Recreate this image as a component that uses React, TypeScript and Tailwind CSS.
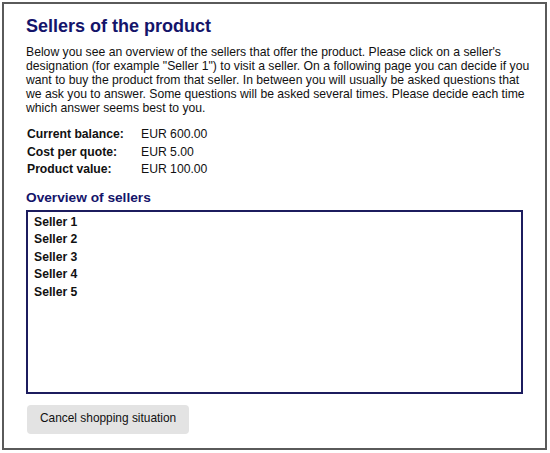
export default function App() {
  const rows = [
    ["Current balance:", "EUR 600.00"],
    ["Cost per quote:", "EUR 5.00"],
    ["Product value:", "EUR 100.00"],
  ];
  const sellers = ["Seller 1", "Seller 2", "Seller 3", "Seller 4", "Seller 5"];
  return (
    <div className="w-[550px] h-[453px] bg-white pt-[2px] pl-[2px]" style={{ fontFamily: '"Liberation Sans", Arial, sans-serif' }}>
      <div className="w-[545px] h-[448px] border-2 border-[#5a5a5a] pl-[22px] pr-[14px] pt-[12px] text-black">
        <h1 className="text-[18px] leading-[21px] font-bold text-[#14146a]">Sellers of the product</h1>
        <p className="mt-[8px] text-[12.2px] leading-[14px] text-[#111]">
          Below you see an overview of the sellers that offer the product. Please click on a seller's designation (for example "Seller 1") to visit a seller. On a following page you can decide if you want to buy the product from that seller. In between you will usually be asked questions that we ask you to answer. Some questions will be asked several times. Please decide each time which answer seems best to you.
        </p>
        <div className="mt-[11px] text-[12.2px] leading-[17.5px] text-[#111]">
          {rows.map(([k, v]) => (
            <div key={k} className="flex">
              <div className="w-[115px] pl-[1px] font-bold">{k}</div>
              <div>{v}</div>
            </div>
          ))}
        </div>
        <h2 className="mt-[11px] text-[13.7px] leading-[16px] font-bold text-[#14146a]">Overview of sellers</h2>
        <div className="mt-[4px] w-[497px] h-[184px] border-2 border-[#1c1c5e] pl-[6px] pt-[2px] text-[12.2px] leading-[17.5px] font-bold text-[#111]">
          {sellers.map((s) => (
            <div key={s}>{s}</div>
          ))}
        </div>
        <button className="mt-[11px] ml-[1px] w-[162px] h-[29px] rounded-[4px] bg-[#e3e3e3] text-[11.9px] text-[#111] pl-[13px] text-left whitespace-nowrap">
          Cancel shopping situation
        </button>
      </div>
    </div>
  );
}
